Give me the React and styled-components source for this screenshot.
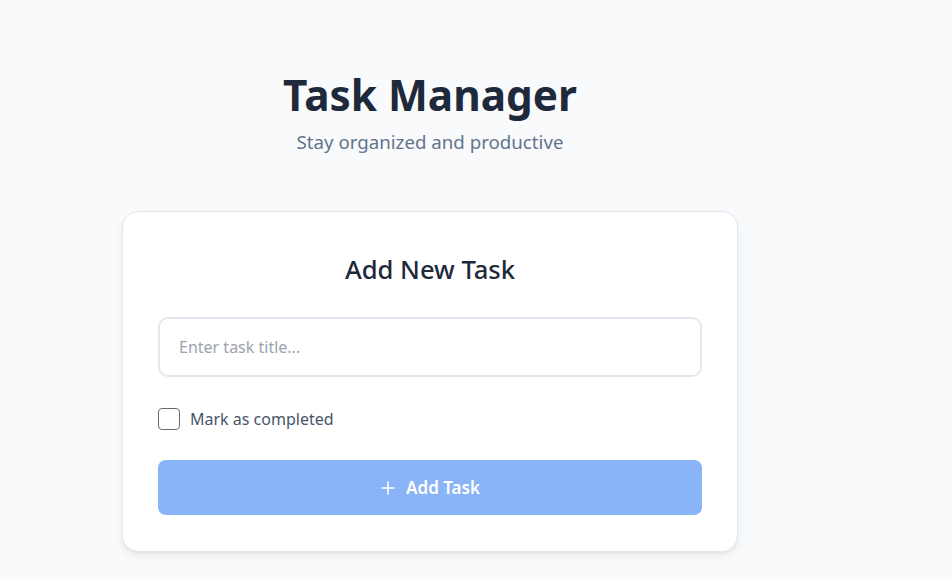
import React, { useState } from "react";
import styled, { createGlobalStyle } from "styled-components";

const Global = createGlobalStyle`
  html, body { margin: 0; padding: 0; background: #f8fafc; }
  body { font-family: "Noto Sans", "Open Sans", sans-serif; color: #1e293b; }
  * { box-sizing: border-box; }
`;

const Page = styled.div`
  width: 860px;
  padding: 67px 0 40px;
  display: flex;
  flex-direction: column;
  align-items: center;
`;

const Header = styled.header`
  text-align: center;
  margin-bottom: 56px;
`;

const Title = styled.h1`
  margin: 0;
  font-size: 42.3px;
  font-weight: 700;
  line-height: 56px;
  color: #1e293b;
`;

const Subtitle = styled.p`
  margin: 6px 0 0;
  font-size: 18.7px;
  line-height: 26px;
  color: #64748b;
`;

const Card = styled.section`
  width: 616px;
  background: #ffffff;
  border: 1px solid #e2e8f0;
  border-radius: 16px;
  box-shadow: 0 4px 8px -1px rgba(0, 0, 0, 0.08), 0 2px 4px -2px rgba(0, 0, 0, 0.06);
  padding: 40px 35px 36px;
  display: flex;
  flex-direction: column;
`;

const CardTitle = styled.h2`
  margin: 0 0 29px;
  text-align: center;
  font-size: 25.6px;
  font-weight: 500;
  line-height: 36px;
  color: #1e293b;
`;

const Input = styled.input`
  width: 100%;
  height: 60px;
  border: 2px solid #e2e8f0;
  border-radius: 10px;
  padding: 0 19px;
  font-family: inherit;
  font-size: 16px;
  color: #1e293b;
  background: #fff;
  outline: none;
  &::placeholder { color: #9ca3af; }
`;

const CheckRow = styled.label`
  display: flex;
  align-items: center;
  gap: 10px;
  margin: 31px 0 30px;
  font-size: 16px;
  color: #475569;
  cursor: pointer;
`;

const Check = styled.input`
  appearance: none;
  margin: 0;
  width: 22px;
  height: 22px;
  border: 1.5px solid #6b6b6b;
  border-radius: 4px;
  background: #fff;
`;

const Button = styled.button`
  width: 100%;
  height: 55px;
  border: none;
  border-radius: 8px;
  background: #8ab4f8;
  color: #ffffff;
  font-family: inherit;
  font-size: 17px;
  font-weight: 600;
  display: flex;
  align-items: center;
  justify-content: center;
  gap: 10px;
  cursor: not-allowed;
`;

const Plus = styled.svg`
  width: 16px;
  height: 16px;
`;

export default function App() {
  const [title, setTitle] = useState("");
  const [done, setDone] = useState(false);
  return (
    <>
      <Global />
      <Page>
        <Header>
          <Title>Task Manager</Title>
          <Subtitle>Stay organized and productive</Subtitle>
        </Header>
        <Card>
          <CardTitle>Add New Task</CardTitle>
          <Input
            placeholder="Enter task title..."
            value={title}
            onChange={(e) => setTitle(e.target.value)}
          />
          <CheckRow>
            <Check type="checkbox" checked={done} onChange={(e) => setDone(e.target.checked)} />
            Mark as completed
          </CheckRow>
          <Button disabled>
            <Plus viewBox="0 0 16 16" fill="none" stroke="currentColor" strokeWidth="1.6" strokeLinecap="round">
              <path d="M8 2v12M2 8h12" />
            </Plus>
            Add Task
          </Button>
        </Card>
      </Page>
    </>
  );
}
